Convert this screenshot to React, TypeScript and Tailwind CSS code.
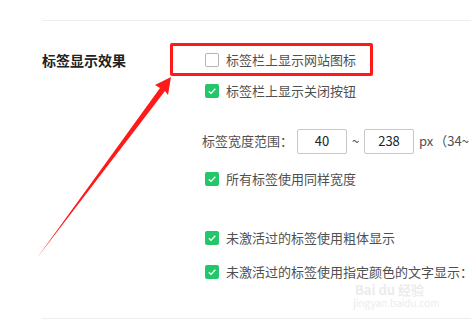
import React from "react";

const font = { fontFamily: '"Noto Sans CJK SC", "Microsoft YaHei", "Noto Sans", sans-serif' };

function Check({ on }: { on: boolean }) {
  return on ? (
    <span className="flex h-[14px] w-[14px] shrink-0 items-center justify-center rounded-[2px] bg-[#22c76a]">
      <svg width="10" height="10" viewBox="0 0 10 10">
        <path d="M1.8 5.2 L4 7.4 L8.3 2.8" fill="none" stroke="#fff" strokeWidth="1.3" />
      </svg>
    </span>
  ) : (
    <span className="h-[14px] w-[14px] shrink-0 rounded-[2px] border border-[#b5b5b5] bg-white" />
  );
}

function Row({ on, text, mt }: { on: boolean; text: string; mt: string }) {
  return (
    <div className={`flex h-[20px] items-center gap-[7px] whitespace-nowrap pl-[3px] ${mt}`}>
      <Check on={on} />
      <span className="text-[13px] text-[#505050]">{text}</span>
    </div>
  );
}

export default function App() {
  return (
    <div className="relative h-[320px] w-[471px] overflow-hidden bg-white" style={font}>
      <div className="pl-[42px] pt-[20px]">
        <div className="h-px bg-[#eeeeee]" />
        <div className="mt-[29px] flex">
          <div className="w-[160px] shrink-0">
            <div className="flex h-[20px] items-center text-[14px] font-bold text-[#222]">标签显示效果</div>
          </div>
          <div className="flex flex-col">
            <Row on={false} text="标签栏上显示网站图标" mt="mt-0" />
            <Row on={true} text="标签栏上显示关闭按钮" mt="mt-[11px]" />
            <div className="mt-[27px] flex h-[26px] items-center whitespace-nowrap text-[13px] text-[#505050]">
              <span className="w-[95px] shrink-0">标签宽度范围：</span>
              <span className="flex h-[25px] w-[50px] shrink-0 items-center justify-center rounded-[2px] border border-[#c8c8c8] text-[#222]">40</span>
              <span className="ml-[5px] w-[12px] shrink-0">~</span>
              <span className="flex h-[25px] w-[50px] shrink-0 items-center justify-center rounded-[2px] border border-[#c8c8c8] text-[#222]">238</span>
              <span className="ml-[5px]">px</span>
              <span className="ml-[1px]">（34~</span>
            </div>
            <Row on={true} text="所有标签使用同样宽度" mt="mt-[15px]" />
            <Row on={true} text="未激活过的标签使用粗体显示" mt="mt-[39px]" />
            <Row on={true} text="未激活过的标签使用指定颜色的文字显示：" mt="mt-[14px]" />
          </div>
        </div>
        <div className="mt-[36px] h-px bg-[#eeeeee]" />
      </div>

      {/* watermark */}
      <div className="absolute left-[355px] top-[283px] text-[13px] font-bold leading-none text-[#ececec]">Bai du 经验</div>
      <div className="absolute left-[353px] top-[298px] text-[10px] leading-none text-[#ececec]">jingyan.baidu.com</div>

      {/* red highlight box */}
      <div className="absolute left-[170px] top-[43px] h-[33px] w-[203px] rounded-[2px] border-[3px] border-[#ff1a1a]" />

      {/* arrow */}
      <svg className="absolute left-0 top-0" width="471" height="320" viewBox="0 0 471 320">
        <polygon points="171,77 155,85 160,88 37,258 165,91 168,95" fill="#ff1a1a" />
      </svg>
    </div>
  );
}
